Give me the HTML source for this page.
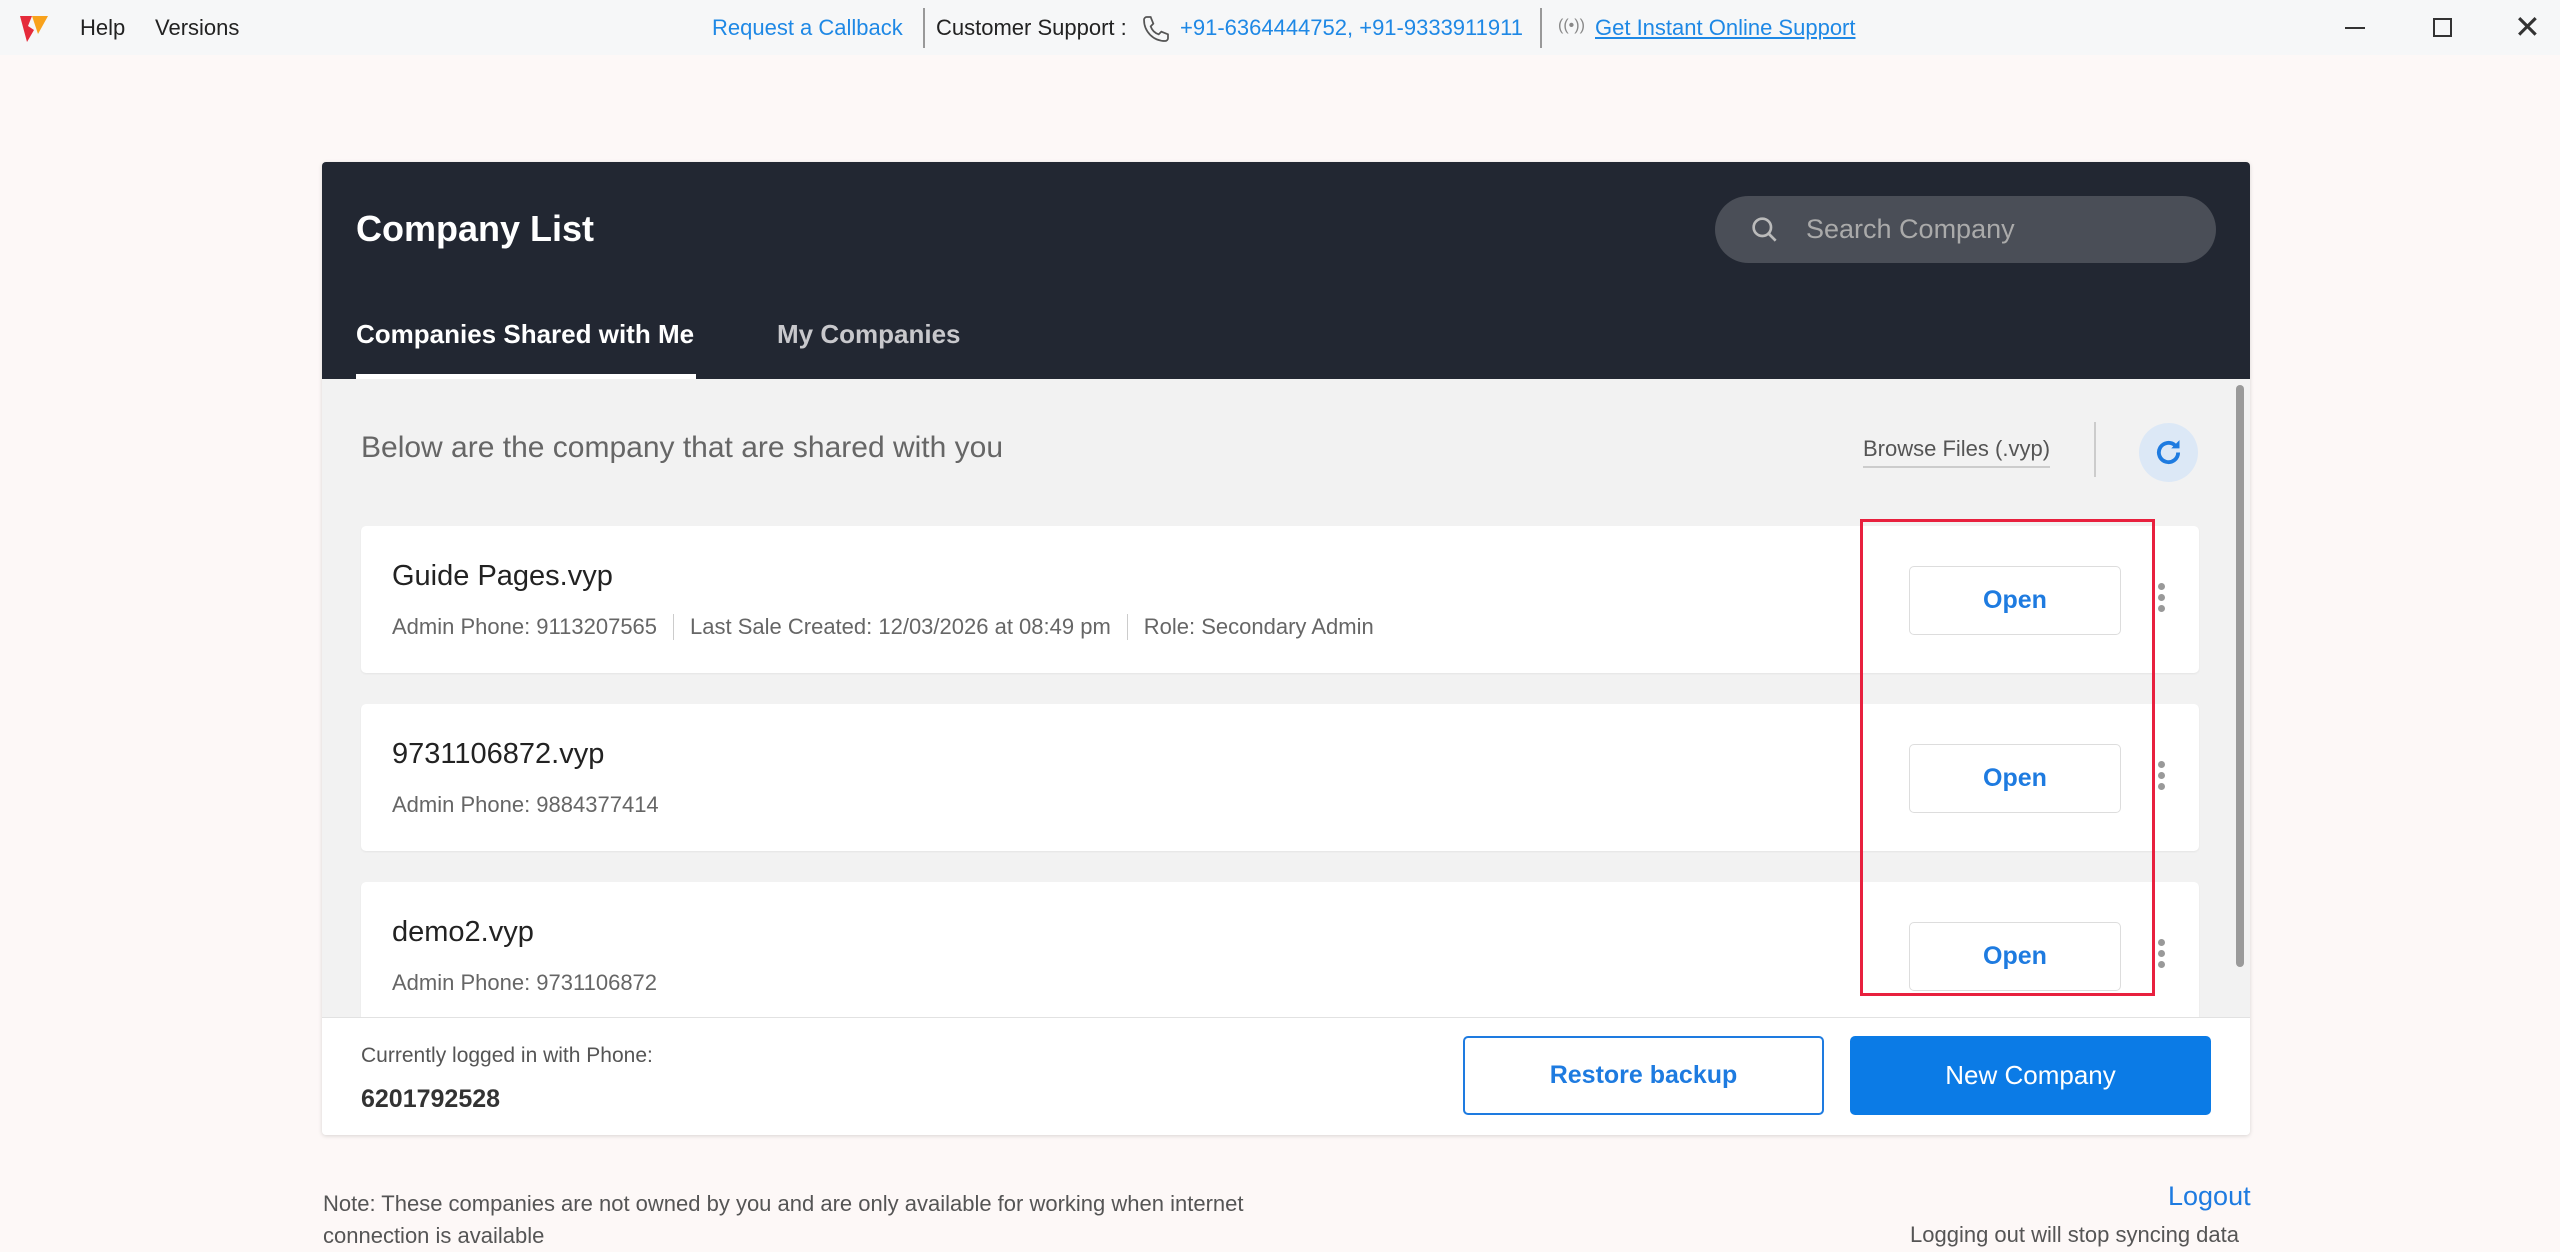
<!DOCTYPE html>
<html><head><meta charset="utf-8"><style>
*{margin:0;padding:0;box-sizing:border-box}
body{width:2560px;height:1230px;overflow:hidden;background:#fdf8f7;font-family:"Liberation Sans",sans-serif;position:relative;color:#222}
.a{position:absolute;white-space:nowrap}
.top{position:absolute;left:0;top:0;width:2560px;height:55px;background:#f6f7f8}
.blue{color:#1e88e5}
.panel{position:absolute;left:322px;top:162px;width:1928px;height:973px;background:#f2f2f2;border-radius:4px;box-shadow:0 1px 4px rgba(0,0,0,.15);overflow:hidden}
.hdr{position:absolute;left:0;top:0;width:100%;height:217px;background:#222732}
.card{position:absolute;left:39px;width:1838px;height:147px;background:#fff;border-radius:5px;box-shadow:0 1px 2px rgba(0,0,0,.06)}
.nm{position:absolute;left:31px;top:34px;font-size:29px;color:#222}
.meta{position:absolute;left:31px;top:88px;font-size:22px;color:#666}
.meta span{display:inline-block;border-right:1px solid #ccc;padding-right:16px;margin-right:16px}
.meta span:last-child{border:none}
.open{position:absolute;left:1548px;top:40px;width:212px;height:69px;border:1px solid #ddd;border-radius:5px;color:#1e7be0;font-weight:bold;font-size:25px;text-align:center;line-height:67px}
.dots{position:absolute;left:1797px;top:57px;width:7px}
.dots i{display:block;width:7px;height:7px;border-radius:50%;background:#999;margin-bottom:4px}
</style></head><body>
<div class="top"></div>
<svg class="a" style="left:18px;top:14px" width="32" height="30" viewBox="0 0 32 30"><path d="M2 2h12l-4 10 6 4-7 12z" fill="#e52b3b"/><path d="M14 2h16l-10 18z" fill="#f8a21c"/></svg>
<div class="a" style="left:80px;top:15px;font-size:22px">Help</div>
<div class="a" style="left:155px;top:15px;font-size:22px">Versions</div>
<div class="a blue" style="left:712px;top:15px;font-size:22px">Request a Callback</div>
<div class="a" style="left:923px;top:8px;width:2px;height:40px;background:#999"></div>
<div class="a" style="left:936px;top:15px;font-size:22px">Customer Support :</div>
<svg class="a" style="left:1140px;top:13px" width="32" height="32" viewBox="0 0 24 24"><path d="M5 3l3 0 2 5-2 2c1 3 3 5 6 6l2-2 5 2v3c0 1-1 2-2 2C10 21 3 14 3 5c0-1 1-2 2-2z" fill="none" stroke="#555" stroke-width="1.3"/></svg>
<div class="a blue" style="left:1180px;top:15px;font-size:22px">+91-6364444752, +91-9333911911</div>
<div class="a" style="left:1540px;top:8px;width:2px;height:40px;background:#999"></div>
<div class="a" style="left:1558px;top:17px;font-size:16px;color:#888">((•))</div>
<div class="a blue" style="left:1595px;top:15px;font-size:22px;text-decoration:underline">Get Instant Online Support</div>
<div class="a" style="left:2345px;top:27px;width:20px;height:2px;background:#333"></div>
<div class="a" style="left:2433px;top:18px;width:19px;height:19px;border:2px solid #333"></div>
<div class="a" style="left:2514px;top:8px;font-size:32px;color:#333">✕</div>

<div class="panel">
 <div class="hdr">
  <div class="a" style="left:34px;top:46px;font-size:36px;font-weight:bold;color:#fff">Company List</div>
  <div class="a" style="left:1393px;top:34px;width:501px;height:67px;border-radius:34px;background:#4a4e57"></div>
  <svg class="a" style="left:1427px;top:52px" width="32" height="32" viewBox="0 0 24 24"><circle cx="10" cy="10" r="6.5" fill="none" stroke="#bbb" stroke-width="2"/><path d="M15 15l5 5" stroke="#bbb" stroke-width="2"/></svg>
  <div class="a" style="left:1484px;top:52px;font-size:27px;color:#aaa">Search Company</div>
  <div class="a" style="left:34px;top:157px;font-size:26px;font-weight:bold;color:#fff">Companies Shared with Me</div>
  <div class="a" style="left:34px;top:212px;width:340px;height:5px;background:#fff"></div>
  <div class="a" style="left:455px;top:157px;font-size:26px;font-weight:bold;color:#c8c8cc">My Companies</div>
 </div>
 <div class="a" style="left:39px;top:269px;font-size:30px;color:#666">Below are the company that are shared with you</div>
 <div class="a" style="left:1541px;top:274px;font-size:22px;color:#555;border-bottom:2px solid #ccc;padding-bottom:4px">Browse Files (.vyp)</div>
 <div class="a" style="left:1772px;top:260px;width:2px;height:55px;background:#ccc"></div>
 <div class="a" style="left:1817px;top:261px;width:59px;height:59px;border-radius:50%;background:#dce8f6"></div>
 <svg class="a" style="left:1830px;top:274px" width="33" height="33" viewBox="0 0 24 24"><path d="M19 12a7 7 0 1 1-2.2-5.1" fill="none" stroke="#1e7be0" stroke-width="2.8"/><path d="M20 3v6h-6z" fill="#1e7be0"/></svg>
 <div class="card" style="top:364px"><div class="nm">Guide Pages.vyp</div><div class="meta"><span>Admin Phone: 9113207565</span><span>Last Sale Created: 12/03/2026 at 08:49 pm</span><span>Role: Secondary Admin</span></div><div class="open">Open</div><div class="dots"><i></i><i></i><i></i></div></div>
 <div class="card" style="top:542px"><div class="nm">9731106872.vyp</div><div class="meta"><span>Admin Phone: 9884377414</span></div><div class="open">Open</div><div class="dots"><i></i><i></i><i></i></div></div>
 <div class="card" style="top:720px"><div class="nm">demo2.vyp</div><div class="meta"><span>Admin Phone: 9731106872</span></div><div class="open">Open</div><div class="dots"><i></i><i></i><i></i></div></div>
 <div class="a" style="left:1538px;top:357px;width:295px;height:477px;border:3px solid #e8203e"></div>
 <div class="a" style="left:1914px;top:223px;width:8px;height:582px;border-radius:4px;background:#9a9a9a"></div>
 <div class="a" style="left:0;top:855px;width:100%;height:118px;background:#fff;border-top:1px solid #e2e2e2">
  <div class="a" style="left:39px;top:26px;font-size:21px;color:#555">Currently logged in with Phone:</div>
  <div class="a" style="left:39px;top:67px;font-size:25px;font-weight:bold;color:#333">6201792528</div>
  <div class="a" style="left:1141px;top:18px;width:361px;height:79px;border:2px solid #1e7be0;border-radius:5px;color:#1e7be0;font-weight:bold;font-size:25px;text-align:center;line-height:75px">Restore backup</div>
  <div class="a" style="left:1528px;top:18px;width:361px;height:79px;background:#0b7be6;border-radius:5px;color:#fff;font-size:26px;text-align:center;line-height:79px">New Company</div>
 </div>
</div>
<div class="a" style="left:323px;top:1188px;font-size:22px;color:#555;line-height:32px">Note: These companies are not owned by you and are only available for working when internet<br>connection is available</div>
<div class="a blue" style="left:2168px;top:1181px;font-size:27px;color:#1e7be0">Logout</div>
<div class="a" style="left:1910px;top:1222px;font-size:22px;color:#555">Logging out will stop syncing data</div>
</body></html>
